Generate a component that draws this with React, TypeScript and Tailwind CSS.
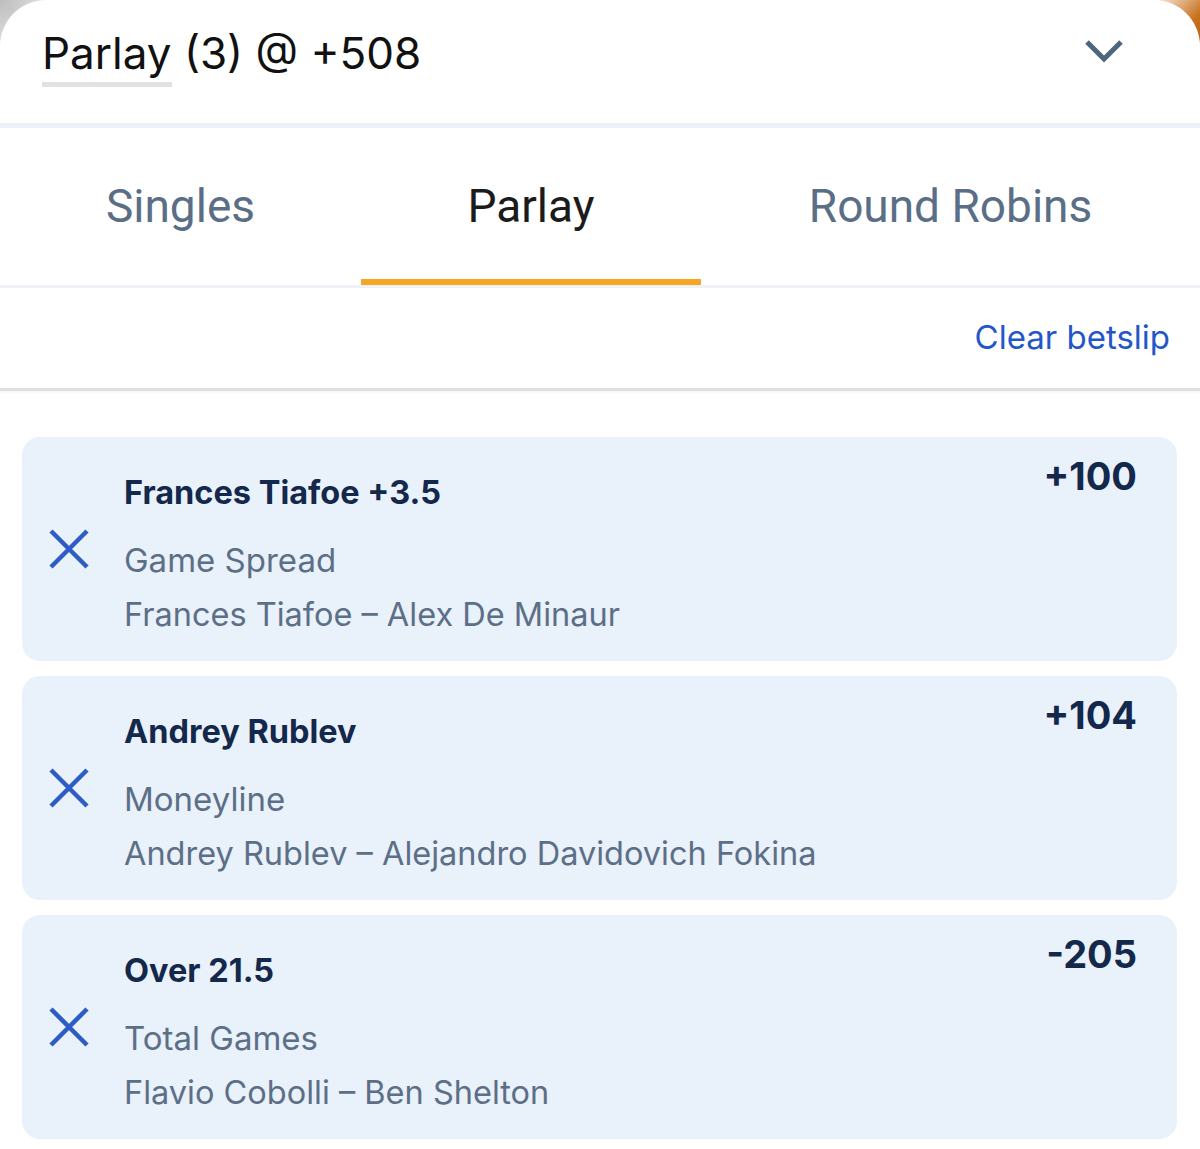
import React from "react";

type Leg = { title: string; market: string; event: string; odds: string };

const legs: Leg[] = [
  { title: "Frances Tiafoe +3.5", market: "Game Spread", event: "Frances Tiafoe – Alex De Minaur", odds: "+100" },
  { title: "Andrey Rublev", market: "Moneyline", event: "Andrey Rublev – Alejandro Davidovich Fokina", odds: "+104" },
  { title: "Over 21.5", market: "Total Games", event: "Flavio Cobolli – Ben Shelton", odds: "-205" },
];

function XIcon() {
  return (
    <svg width="40" height="40" viewBox="0 0 40 40" fill="none">
      <path d="M2 2 L38 38 M38 2 L2 38" stroke="#2d5cc6" strokeWidth="4.5" strokeLinecap="butt" />
    </svg>
  );
}

function Card({ leg }: { leg: Leg }) {
  return (
    <div className="flex h-[224px] rounded-[18px] bg-[#e9f1fa] pr-[40px]">
      <div className="flex w-[102px] shrink-0 items-center pl-[27px]">
        <XIcon />
      </div>
      <div className="flex flex-1 flex-col font-['Inter',sans-serif]">
        <div className="mt-[36px] text-[32.5px] font-bold leading-[40px] text-[#13284b]">{leg.title}</div>
        <div className="mt-[25px] text-[33px] leading-[44px] text-[#5c6f87]">{leg.market}</div>
        <div className="mt-[13px] text-[32.5px] leading-[40px] text-[#5c6f87]">{leg.event}</div>
      </div>
      <div className="pt-[16px] font-['Inter',sans-serif] text-[38px] font-bold leading-[46px] text-[#13284b]">
        {leg.odds}
      </div>
    </div>
  );
}

export default function App() {
  return (
    <div className="relative h-[1149px] w-[1200px] overflow-hidden bg-white">
      <div className="absolute left-0 top-0 h-[50px] w-[50px] bg-[radial-gradient(circle_at_0%_0%,#bdbdbd,#e2e2e2_70%)]" />
      <div className="absolute right-0 top-0 h-[50px] w-[40px] bg-[linear-gradient(135deg,#f3e3cf_0%,#c8701e_60%,#b85f12_100%)]" />
      <div className="relative h-full rounded-t-[46px] bg-white">
        {/* Header */}
        <div className="flex h-[123px] items-start justify-between pl-[42px] pr-[76px] pt-[26px]">
          <div className="font-['Inter',sans-serif] text-[44px] leading-[54px] text-[#111111]">
            <span className="inline-block border-b-[5px] border-[#e2e2e2] pb-[3px] leading-[52px]">Parlay</span> (3) @ +508
          </div>
          <svg width="40" height="28" viewBox="0 0 40 28" className="mt-[12px]" fill="none">
            <path d="M3 4 L20 21 L37 4" stroke="#4e6582" strokeWidth="5" />
          </svg>
        </div>
        <div className="h-[5px] bg-[#edf2f9]" />
        {/* Tabs */}
        <div className="flex h-[160px] border-b-[3px] border-[#eef1f6] font-['Roboto',sans-serif] text-[46px]">
          <div className="flex w-[361px] items-center justify-center text-[#5a6e86]">Singles</div>
          <div className="relative flex w-[340px] items-center justify-center text-[#1b1b1b]">
            Parlay
            <div className="absolute bottom-0 left-0 right-0 h-[6px] bg-[#f6a623]" />
          </div>
          <div className="flex flex-1 items-center justify-center text-[#5a6e86]">Round Robins</div>
        </div>
        {/* Clear betslip */}
        <div className="flex h-[103px] items-center justify-end border-b-[3px] border-[#dedede] pr-[30px] font-['Inter',sans-serif] text-[33px] text-[#2357c8] shadow-[0_2px_3px_rgba(0,0,0,0.04)]">
          Clear betslip
        </div>
        {/* Cards */}
        <div className="flex flex-col gap-[15px] pl-[22px] pr-[23px] pt-[46px]">
          {legs.map((l) => (
            <Card key={l.title} leg={l} />
          ))}
        </div>
      </div>
    </div>
  );
}
